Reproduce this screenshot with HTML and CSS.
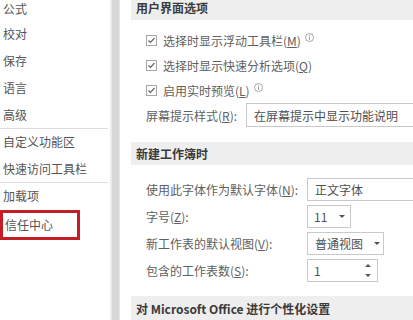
FILE: index.html
```html
<!DOCTYPE html>
<html lang="zh-CN">
<head>
    <meta charset="UTF-8">
    <title>Excel 选项 - 常规</title>
    <link rel="stylesheet" href="styles.css">
</head>
<body>

<div class="window">
    <!-- Menu de gauche -->
    <aside class="nav">
        <ul class="nav-list">
            <li class="top">公式</li>
            <li>校对</li>
            <li>保存</li>
            <li>语言</li>
            <li>高级</li>
            <li class="sep">自定义功能区</li>
            <li>快速访问工具栏</li>
            <li class="sep">加载项</li>
            <li class="active">信任中心</li>
        </ul>
    </aside>

    <div class="scrollbar"></div>

    <!-- Options -->
    <main class="options">
        <div class="section-title first">用户界面选项</div>
        <div class="group ui-group">
            <div class="check-row">
                <svg class="checkbox" width="11" height="11" viewBox="0 0 11 11"><rect x="0.5" y="0.5" width="10" height="10" fill="#fff" stroke="#a6a6a6"/><path d="M2.5 5.5 L4.5 7.5 L8.5 3" fill="none" stroke="#666" stroke-width="1.2"/></svg>
                <span>选择时显示浮动工具栏(<u>M</u>)</span>
                <svg class="info" width="9" height="9" viewBox="0 0 9 9"><circle cx="4.5" cy="4.5" r="4" fill="none" stroke="#8f8f8f" stroke-width="0.8"/><path d="M4.5 3.8 V6.8" stroke="#8f8f8f" stroke-width="0.9"/><circle cx="4.5" cy="2.5" r="0.55" fill="#8f8f8f"/></svg>
            </div>
            <div class="check-row">
                <svg class="checkbox" width="11" height="11" viewBox="0 0 11 11"><rect x="0.5" y="0.5" width="10" height="10" fill="#fff" stroke="#a6a6a6"/><path d="M2.5 5.5 L4.5 7.5 L8.5 3" fill="none" stroke="#666" stroke-width="1.2"/></svg>
                <span>选择时显示快速分析选项(<u>Q</u>)</span>
            </div>
            <div class="check-row">
                <svg class="checkbox" width="11" height="11" viewBox="0 0 11 11"><rect x="0.5" y="0.5" width="10" height="10" fill="#fff" stroke="#a6a6a6"/><path d="M2.5 5.5 L4.5 7.5 L8.5 3" fill="none" stroke="#666" stroke-width="1.2"/></svg>
                <span>启用实时预览(<u>L</u>)</span>
                <svg class="info" width="9" height="9" viewBox="0 0 9 9"><circle cx="4.5" cy="4.5" r="4" fill="none" stroke="#8f8f8f" stroke-width="0.8"/><path d="M4.5 3.8 V6.8" stroke="#8f8f8f" stroke-width="0.9"/><circle cx="4.5" cy="2.5" r="0.55" fill="#8f8f8f"/></svg>
            </div>
            <div class="field-row tip-row">
                <span class="label">屏幕提示样式(<u>R</u>):</span>
                <div class="box open">在屏幕提示中显示功能说明</div>
            </div>
        </div>

        <div class="section-title">新建工作簿时</div>
        <div class="group book-group">
            <div class="field-row">
                <span class="label">使用此字体作为默认字体(<u>N</u>):</span>
                <div class="box open">正文字体</div>
            </div>
            <div class="field-row">
                <span class="label">字号(<u>Z</u>):</span>
                <div class="box size-box">11 <span class="arrow"></span></div>
            </div>
            <div class="field-row">
                <span class="label">新工作表的默认视图(<u>V</u>):</span>
                <div class="box view-box">普通视图 <span class="arrow"></span></div>
            </div>
            <div class="field-row">
                <span class="label">包含的工作表数(<u>S</u>):</span>
                <div class="box spin-box">1
                    <span class="spin">
                        <span class="arrow up"></span>
                        <span class="arrow"></span>
                    </span>
                </div>
            </div>
        </div>

        <div class="section-title">对 Microsoft Office 进行个性化设置</div>
    </main>
</div>

</body>
</html>
```

FILE: styles.css
```css
body {
    margin: 0;
    padding: 0;
    background: #ffffff;
    font-family: "Noto Sans CJK SC", "Noto Sans", sans-serif;
    font-size: 12px;
    color: #606060;
}

.window {
    display: flex;
    height: 320px;
    overflow: hidden;
}

/* Menu de gauche */
.nav {
    width: 110px;
    flex-shrink: 0;
}
.nav-list {
    list-style: none;
    margin: 0;
    padding: 0;
}
.nav-list li {
    box-sizing: border-box;
    width: 108px;
    height: 27px;
    line-height: 27px;
    padding-left: 3px;
    color: #555555;
    white-space: nowrap;
}
.nav-list li.top {
    height: 20px;
    line-height: 17px;
}
.nav-list li.sep {
    border-top: 1px solid #dddddd;
    line-height: 26px;
}
.nav-list li.active {
    width: 80px;
    height: 30px;
    line-height: 24px;
    padding-left: 2px;
    border: 3px solid #c41d23;
    margin-top: 1px;
}

.scrollbar {
    box-sizing: border-box;
    width: 10px;
    flex-shrink: 0;
    background: #d8d8d8;
    border-left: 2px solid #ececec;
    border-right: 1px solid #e8e8e8;
}

/* Options */
.options {
    flex: 1;
    min-width: 0;
    padding-left: 11px;
}
.section-title {
    height: 23px;
    line-height: 23px;
    padding-left: 5px;
    background: #eeeeee;
    color: #3a3a3a;
    font-weight: bold;
    white-space: nowrap;
}
.section-title.first {
    height: 20px;
    line-height: 15px;
}
.section-title:last-child {
    height: 25px;
    line-height: 25px;
}

.group {
    padding-left: 15px;
}
.ui-group {
    padding-top: 8px;
    margin-bottom: 15px;
}
.book-group {
    padding-top: 13px;
    margin-bottom: 14px;
    display: flex;
    flex-direction: column;
    gap: 4px;
}

.check-row {
    display: flex;
    align-items: center;
    height: 25px;
    white-space: nowrap;
}
.checkbox {
    margin-right: 6px;
    flex-shrink: 0;
}
.info {
    margin-left: 4px;
    margin-bottom: 6px;
}

.field-row {
    display: flex;
    align-items: center;
    height: 23px;
    white-space: nowrap;
}
.field-row .label {
    width: 161px;
    flex-shrink: 0;
}
.tip-row {
    height: 24px;
}
.tip-row .label {
    width: 100px;
}

.box {
    box-sizing: border-box;
    height: 100%;
    border: 1px solid #c9c9c9;
    padding-left: 7px;
    display: flex;
    align-items: center;
    color: #505050;
    background: #ffffff;
}
.box.open {
    flex: 1;
    border-right: none;
}
.size-box {
    width: 44px;
    padding-left: 6px;
    gap: 12px;
}
.view-box {
    width: 77px;
    gap: 11px;
}
.spin-box {
    width: 71px;
    padding-left: 6px;
    position: relative;
}
.arrow {
    width: 0;
    height: 0;
    border-left: 3px solid transparent;
    border-right: 3px solid transparent;
    border-top: 3px solid #555555;
}
.arrow.up {
    border-top: none;
    border-bottom: 3px solid #555555;
}
.spin {
    position: absolute;
    right: 6px;
    top: 4px;
    bottom: 4px;
    display: flex;
    flex-direction: column;
    justify-content: space-between;
}
```
